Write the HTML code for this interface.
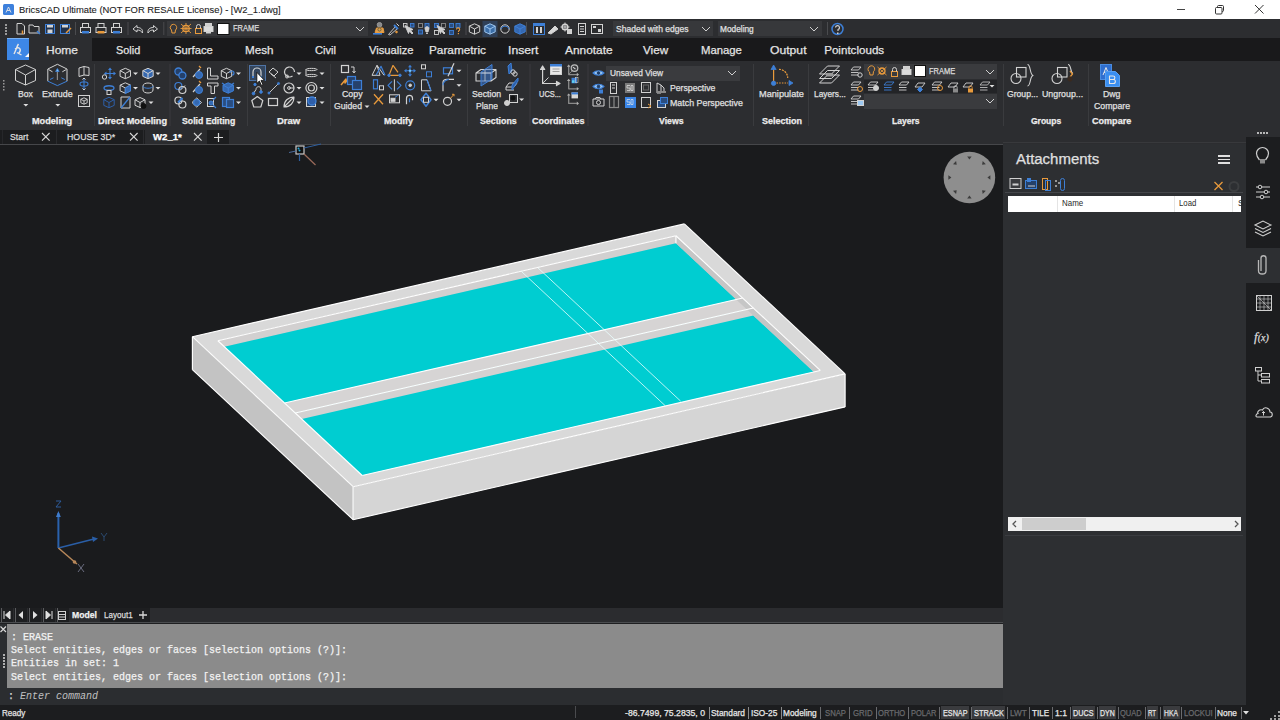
<!DOCTYPE html>
<html><head><meta charset="utf-8">
<style>
*{margin:0;padding:0;box-sizing:border-box}
html,body{width:1280px;height:720px;overflow:hidden;background:#1b1c1e;font-family:"Liberation Sans",sans-serif;position:relative}
.a{position:absolute}
.t{position:absolute;white-space:nowrap;color:#e6e6e6;-webkit-text-stroke:0.25px currentColor}
svg{overflow:visible}
</style></head><body>
<div class="a" style="left:0px;top:0px;width:1280px;height:19px;background:#ffffff;"></div>
<div class="a" style="left:0px;top:19px;width:1280px;height:19px;background:#2c2d30;"></div>
<div class="a" style="left:0px;top:38px;width:1280px;height:23px;background:#19191b;"></div>
<div class="a" style="left:0px;top:61px;width:1280px;height:83px;background:#2c2d30;"></div>
<div class="a" style="left:0px;top:130px;width:229px;height:14px;background:#1c1d1f;"></div>
<div class="a" style="left:0px;top:144px;width:1003px;height:464px;background:#1a1b1d;"></div>
<div class="a" style="left:1003px;top:144px;width:243px;height:561px;background:#2d2f32;"></div>
<div class="a" style="left:1002px;top:144px;width:1px;height:561px;background:#1a1b1d;"></div>
<div class="a" style="left:1003px;top:142px;width:243px;height:1px;background:#38393c;"></div>
<div class="a" style="left:1246px;top:137px;width:34px;height:568px;background:#1c1d1f;"></div>
<div class="a" style="left:1246px;top:248px;width:34px;height:35px;background:#2d2f32;"></div>
<div class="a" style="left:0px;top:608px;width:1003px;height:15px;background:#252629;"></div>
<div class="a" style="left:0px;top:623px;width:1003px;height:82px;background:#2b2d30;"></div>
<div class="a" style="left:7px;top:624px;width:996px;height:64px;background:#8b8b8b;"></div>
<div class="a" style="left:0px;top:705px;width:1280px;height:15px;background:#1c1d1f;"></div>
<div class="a" style="left:167px;top:21px;width:201px;height:15px;background:#37383b;"></div>
<div class="a" style="left:613px;top:21px;width:100px;height:15px;background:#37383b;"></div>
<div class="a" style="left:718px;top:21px;width:104px;height:15px;background:#37383b;"></div>
<div class="a" style="left:606px;top:66px;width:134px;height:15px;background:#3a3b3e;"></div>
<div class="a" style="left:864px;top:63.5px;width:133px;height:15.5px;background:#3a3b3e;"></div>
<div class="a" style="left:864px;top:79.5px;width:133px;height:13px;background:#232427;"></div>
<div class="a" style="left:864px;top:93.5px;width:133px;height:15.5px;background:#3a3b3e;"></div>
<div class="a" style="left:3px;top:4px;width:11px;height:11px;background:#3d80dc;border-radius:1.5px"></div>
<div class="t" style="left:18.50px;top:4.86px;font-size:9.5px;color:#222222;font-weight:normal;line-height:1;transform:scaleX(0.9894);transform-origin:0 0;-webkit-text-stroke:0.1px #222">BricsCAD Ultimate (NOT FOR RESALE License) - [W2_1.dwg]</div>
<div class="a" style="left:1176.5px;top:8.5px;width:8.5px;height:1px;background:#444;"></div>
<svg class="a" style="left:1214px;top:4px;" width="11" height="11" viewBox="0 0 11 11"><rect x="1.5" y="3.5" width="6.5" height="6.5" rx="1" stroke="#333" fill="none"/><path d="M3.5 3V2.5C3.5 1.8 4 1.5 4.5 1.5H8.5C9.2 1.5 9.5 2 9.5 2.5V6.5C9.5 7.2 9 7.5 8.5 7.5H8" stroke="#333" fill="none"/></svg>
<svg class="a" style="left:1254.5px;top:5px;" width="8.5" height="8.5" viewBox="0 0 8.5 8.5"><path d="M0 0L8.5 8.5M8.5 0L0 8.5" stroke="#333" stroke-width="1"/></svg>
<div class="a" style="left:0px;top:38px;width:92px;height:23px;background:#2c2d30;"></div>
<div class="a" style="left:7px;top:38px;width:22px;height:22px;background:#3d87e6;"></div>
<div class="a" style="left:7px;top:38px;width:22px;height:1px;background:#7ab0f0;"></div>
<div class="t" style="left:45.60px;top:44.28px;font-size:11.6px;color:#e4e4e4;font-weight:normal;line-height:1;transform:scaleX(1.0364);transform-origin:0 0;">Home</div>
<div class="t" style="left:115.60px;top:44.28px;font-size:11.6px;color:#e4e4e4;font-weight:normal;line-height:1;transform:scaleX(0.9376);transform-origin:0 0;">Solid</div>
<div class="t" style="left:174.00px;top:44.28px;font-size:11.6px;color:#e4e4e4;font-weight:normal;line-height:1;transform:scaleX(0.9709);transform-origin:0 0;">Surface</div>
<div class="t" style="left:245.30px;top:44.28px;font-size:11.6px;color:#e4e4e4;font-weight:normal;line-height:1;transform:scaleX(1.0049);transform-origin:0 0;">Mesh</div>
<div class="t" style="left:314.80px;top:44.28px;font-size:11.6px;color:#e4e4e4;font-weight:normal;line-height:1;transform:scaleX(0.9624);transform-origin:0 0;">Civil</div>
<div class="t" style="left:369.00px;top:44.28px;font-size:11.6px;color:#e4e4e4;font-weight:normal;line-height:1;transform:scaleX(0.9648);transform-origin:0 0;">Visualize</div>
<div class="t" style="left:429.00px;top:44.28px;font-size:11.6px;color:#e4e4e4;font-weight:normal;line-height:1;transform:scaleX(1.0163);transform-origin:0 0;">Parametric</div>
<div class="t" style="left:508.30px;top:44.28px;font-size:11.6px;color:#e4e4e4;font-weight:normal;line-height:1;transform:scaleX(1.0517);transform-origin:0 0;">Insert</div>
<div class="t" style="left:565.30px;top:44.28px;font-size:11.6px;color:#e4e4e4;font-weight:normal;line-height:1;transform:scaleX(1.0267);transform-origin:0 0;">Annotate</div>
<div class="t" style="left:643.00px;top:44.28px;font-size:11.6px;color:#e4e4e4;font-weight:normal;line-height:1;transform:scaleX(1.0064);transform-origin:0 0;">View</div>
<div class="t" style="left:701.00px;top:44.28px;font-size:11.6px;color:#e4e4e4;font-weight:normal;line-height:1;transform:scaleX(0.9753);transform-origin:0 0;">Manage</div>
<div class="t" style="left:769.50px;top:44.28px;font-size:11.6px;color:#e4e4e4;font-weight:normal;line-height:1;transform:scaleX(1.0489);transform-origin:0 0;">Output</div>
<div class="t" style="left:824.20px;top:44.28px;font-size:11.6px;color:#e4e4e4;font-weight:normal;line-height:1;">Pointclouds</div>
<div class="t" style="left:17.70px;top:88.74px;font-size:9.4px;color:#e0e0e0;font-weight:normal;line-height:1;transform:scaleX(0.9127);transform-origin:0 0;">Box</div>
<div class="t" style="left:42.20px;top:88.74px;font-size:9.4px;color:#e0e0e0;font-weight:normal;line-height:1;transform:scaleX(0.9511);transform-origin:0 0;">Extrude</div>
<div class="t" style="left:341.60px;top:89.04px;font-size:9.4px;color:#e0e0e0;font-weight:normal;line-height:1;transform:scaleX(0.9385);transform-origin:0 0;">Copy</div>
<div class="t" style="left:334.10px;top:101.04px;font-size:9.4px;color:#e0e0e0;font-weight:normal;line-height:1;transform:scaleX(0.9269);transform-origin:0 0;">Guided</div>
<div class="t" style="left:472.00px;top:89.24px;font-size:9.4px;color:#e0e0e0;font-weight:normal;line-height:1;transform:scaleX(0.9330);transform-origin:0 0;">Section</div>
<div class="t" style="left:475.50px;top:101.04px;font-size:9.4px;color:#e0e0e0;font-weight:normal;line-height:1;transform:scaleX(0.9142);transform-origin:0 0;">Plane</div>
<div class="t" style="left:538.75px;top:89.24px;font-size:9.4px;color:#e0e0e0;font-weight:normal;line-height:1;transform:scaleX(0.7947);transform-origin:0 0;">UCS...</div>
<div class="t" style="left:758.75px;top:89.24px;font-size:9.4px;color:#e0e0e0;font-weight:normal;line-height:1;transform:scaleX(0.9790);transform-origin:0 0;">Manipulate</div>
<div class="t" style="left:814.25px;top:89.24px;font-size:9.4px;color:#e0e0e0;font-weight:normal;line-height:1;transform:scaleX(0.8877);transform-origin:0 0;">Layers...</div>
<div class="t" style="left:1006.75px;top:89.24px;font-size:9.4px;color:#e0e0e0;font-weight:normal;line-height:1;transform:scaleX(0.9196);transform-origin:0 0;">Group...</div>
<div class="t" style="left:1042.00px;top:89.24px;font-size:9.4px;color:#e0e0e0;font-weight:normal;line-height:1;transform:scaleX(0.9397);transform-origin:0 0;">Ungroup...</div>
<div class="t" style="left:1102.50px;top:89.24px;font-size:9.4px;color:#e0e0e0;font-weight:normal;line-height:1;transform:scaleX(0.9309);transform-origin:0 0;">Dwg</div>
<div class="t" style="left:1093.75px;top:101.04px;font-size:9.4px;color:#e0e0e0;font-weight:normal;line-height:1;transform:scaleX(0.9372);transform-origin:0 0;">Compare</div>
<div class="t" style="left:669.50px;top:83.29px;font-size:9.4px;color:#e0e0e0;font-weight:normal;line-height:1;transform:scaleX(0.9264);transform-origin:0 0;">Perspective</div>
<div class="t" style="left:669.50px;top:98.29px;font-size:9.4px;color:#e0e0e0;font-weight:normal;line-height:1;transform:scaleX(0.9442);transform-origin:0 0;">Match Perspective</div>
<div class="t" style="left:610.00px;top:68.04px;font-size:9.4px;color:#e0e0e0;font-weight:normal;line-height:1;transform:scaleX(0.8886);transform-origin:0 0;">Unsaved View</div>
<div class="t" style="left:31.60px;top:116.75px;font-size:8.8px;color:#ececec;font-weight:bold;line-height:1;transform:scaleX(1.0380);transform-origin:0 0;">Modeling</div>
<div class="t" style="left:97.60px;top:116.75px;font-size:8.8px;color:#ececec;font-weight:bold;line-height:1;transform:scaleX(1.0470);transform-origin:0 0;">Direct Modeling</div>
<div class="t" style="left:181.75px;top:116.75px;font-size:8.8px;color:#ececec;font-weight:bold;line-height:1;transform:scaleX(0.9904);transform-origin:0 0;">Solid Editing</div>
<div class="t" style="left:276.75px;top:116.75px;font-size:8.8px;color:#ececec;font-weight:bold;line-height:1;transform:scaleX(1.0784);transform-origin:0 0;">Draw</div>
<div class="t" style="left:384.25px;top:116.75px;font-size:8.8px;color:#ececec;font-weight:bold;line-height:1;transform:scaleX(1.0234);transform-origin:0 0;">Modify</div>
<div class="t" style="left:480.00px;top:116.75px;font-size:8.8px;color:#ececec;font-weight:bold;line-height:1;">Sections</div>
<div class="t" style="left:532.00px;top:116.75px;font-size:8.8px;color:#ececec;font-weight:bold;line-height:1;transform:scaleX(1.0224);transform-origin:0 0;">Coordinates</div>
<div class="t" style="left:658.75px;top:116.75px;font-size:8.8px;color:#ececec;font-weight:bold;line-height:1;transform:scaleX(0.9890);transform-origin:0 0;">Views</div>
<div class="t" style="left:761.75px;top:116.75px;font-size:8.8px;color:#ececec;font-weight:bold;line-height:1;transform:scaleX(1.0226);transform-origin:0 0;">Selection</div>
<div class="t" style="left:891.75px;top:116.75px;font-size:8.8px;color:#ececec;font-weight:bold;line-height:1;transform:scaleX(0.9690);transform-origin:0 0;">Layers</div>
<div class="t" style="left:1030.50px;top:116.75px;font-size:8.8px;color:#ececec;font-weight:bold;line-height:1;transform:scaleX(0.9669);transform-origin:0 0;">Groups</div>
<div class="t" style="left:1092.00px;top:116.75px;font-size:8.8px;color:#ececec;font-weight:bold;line-height:1;transform:scaleX(1.0289);transform-origin:0 0;">Compare</div>
<div class="t" style="left:232.50px;top:24.35px;font-size:8.8px;color:#dcdcdc;font-weight:normal;line-height:1;transform:scaleX(0.8539);transform-origin:0 0;">FRAME</div>
<div class="t" style="left:928.75px;top:66.85px;font-size:8.8px;color:#dcdcdc;font-weight:normal;line-height:1;transform:scaleX(0.8523);transform-origin:0 0;">FRAME</div>
<div class="t" style="left:615.60px;top:24.55px;font-size:8.8px;color:#e0e0e0;font-weight:normal;line-height:1;transform:scaleX(0.9687);transform-origin:0 0;">Shaded with edges</div>
<div class="t" style="left:720.00px;top:24.55px;font-size:8.8px;color:#e0e0e0;font-weight:normal;line-height:1;transform:scaleX(0.9446);transform-origin:0 0;">Modeling</div>
<svg class="a" style="left:0px;top:0px;" width="1280" height="720" viewBox="0 0 1280 720"><rect x="5" y="24" width="2" height="2" fill="#9a9a9a"/><rect x="5" y="27" width="2" height="2" fill="#9a9a9a"/><rect x="5" y="30" width="2" height="2" fill="#9a9a9a"/><rect x="5" y="33" width="2" height="2" fill="#9a9a9a"/><path d="M17 23.5H22L24.5 26V34H17Z" stroke="#d2d2d2" stroke-width="1.0" fill="none" stroke-linejoin="round" /><path d="M22.5 30.5V34" stroke="#e89a3c" stroke-width="1.5" fill="none" stroke-linejoin="round" /><path d="M29 25H33L34 26.5H39V33H29Z" stroke="#d2d2d2" stroke-width="1.0" fill="none" stroke-linejoin="round" /><path d="M37 31L40 34" stroke="#3d7fd6" stroke-width="1.5" fill="none" stroke-linejoin="round" /><rect x="45.5" y="24.5" width="9" height="9" stroke="#3d7fd6" stroke-width="1.0" fill="#20324e"/><rect x="47" y="25" width="6" height="2.5" fill="#d2d2d2"/><rect x="47.5" y="29.5" width="5" height="3.5" fill="#d2d2d2"/><rect x="60.5" y="24.5" width="9" height="9" stroke="#3d7fd6" stroke-width="1.0" fill="#20324e"/><rect x="62" y="25" width="6" height="2.5" fill="#d2d2d2"/><path d="M66 33L71 28" stroke="#e89a3c" stroke-width="1.5" fill="none" stroke-linejoin="round" /><rect x="75" y="22" width="1" height="13" fill="#4a4b4e"/><rect x="82.5" y="23.5" width="6" height="4" stroke="#d2d2d2" stroke-width="1.0" fill="none"/><rect x="80.5" y="27.5" width="10" height="5" stroke="#d2d2d2" stroke-width="1.0" fill="none"/><rect x="82" y="31" width="7" height="2.5" fill="#3d7fd6"/><rect x="98.0" y="23.5" width="6" height="4" stroke="#d2d2d2" stroke-width="1.0" fill="none"/><rect x="96.0" y="27.5" width="10" height="5" stroke="#d2d2d2" stroke-width="1.0" fill="none"/><rect x="97.5" y="31" width="7" height="2.5" fill="#e89a3c"/><rect x="113.5" y="23.5" width="6" height="4" stroke="#d2d2d2" stroke-width="1.0" fill="none"/><rect x="111.5" y="27.5" width="10" height="5" stroke="#d2d2d2" stroke-width="1.0" fill="none"/><rect x="113" y="31" width="7" height="2.5" fill="#3d7fd6"/><rect x="127.5" y="22" width="1" height="13" fill="#4a4b4e"/><path d="M133 29L137 25.5V27.5C141 27.5 143 29.5 142.5 33C141 30.5 139.5 30 137 30V32Z" stroke="#d2d2d2" stroke-width="1.0" fill="none" stroke-linejoin="round" /><path d="M157.5 29L153.5 25.5V27.5C149.5 27.5 147.5 29.5 148 33C149.5 30.5 151 30 153.5 30V32Z" stroke="#d2d2d2" stroke-width="1.0" fill="none" stroke-linejoin="round" /><rect x="163.3" y="22" width="1" height="13" fill="#4a4b4e"/><path d="M171 25.5a3.2 3.2 0 1 1 4.5 4.5L175 33H172L171.5 30A3.2 3.2 0 0 1 171 25.5Z" stroke="#e89a3c" stroke-width="1.0" fill="none" stroke-linejoin="round" /><circle cx="186" cy="28.5" r="3.2" stroke="#e89a3c" stroke-width="1.3" fill="none"/><path d="M181 24L191 33M191 24L181 33M186 23V34M180.5 28.5H191.5" stroke="#e89a3c" stroke-width="0.9" fill="none" stroke-linejoin="round" /><rect x="195.5" y="28.5" width="6" height="5" stroke="#e89a3c" stroke-width="1.0" fill="none"/><path d="M196.5 28.5V26.5a2 2 0 0 1 4 0V28.5" stroke="#d2d2d2" stroke-width="1.0" fill="none" stroke-linejoin="round" /><rect x="205.5" y="23.5" width="6" height="3" stroke="#d2d2d2" stroke-width="1" fill="#cfcfcf"/><rect x="204" y="26.5" width="9" height="5" stroke="#d2d2d2" stroke-width="1" fill="#dcdcdc"/><rect x="206" y="31.5" width="5" height="2" fill="#d2d2d2"/><rect x="217.5" y="23.5" width="11.5" height="11" stroke="#111" stroke-width="1" fill="#ffffff"/><path d="M356 27.0L360 31.0L364 27.0" stroke="#d0d0d0" stroke-width="1.0" fill="none" stroke-linejoin="round" /><circle cx="379.5" cy="24.8" r="2.3" stroke="#9a9a9a" stroke-width="1.0" fill="#8a8a8a"/><path d="M375 32.5L376.5 28H383L384 32.5Z" stroke="#e89a3c" stroke-width="1.0" fill="#e0a050" stroke-linejoin="round" /><circle cx="379.5" cy="29.5" r="1.6" stroke="#553" stroke-width="0.8" fill="none"/><path d="M373 33.8H382" stroke="#3d7fd6" stroke-width="1.6" fill="none" stroke-linejoin="round" /><path d="M388.5 34.5L395.5 26.5L397.5 28.5L390 35Z" stroke="#d2d2d2" stroke-width="0.9" fill="none" stroke-linejoin="round" /><path d="M394 25L398 29" stroke="#3d7fd6" stroke-width="2.0" fill="none" stroke-linejoin="round" /><path d="M396.5 23.5L399 26" stroke="#d2d2d2" stroke-width="1.0" fill="none" stroke-linejoin="round" /><circle cx="396.5" cy="32" r="0.9" stroke="#e89a3c" stroke-width="0.8" fill="#e89a3c"/><rect x="403.5" y="23.5" width="3.5" height="3.5" stroke="#d2d2d2" stroke-width="0.9" fill="none"/><rect x="410.5" y="23.5" width="3.5" height="3.5" stroke="#3d7fd6" stroke-width="0.9" fill="#2a4d80"/><path d="M405 25.5L408.5 33.5L409.5 31L412 34L413 33L410.5 30.5L413 29.5Z" stroke="#d2d2d2" stroke-width="0.9" fill="#d0d0d0" stroke-linejoin="round" /><rect x="418.5" y="23.5" width="4" height="4" stroke="#8a8a8a" stroke-width="0.9" fill="none"/><rect x="425" y="23.5" width="4" height="4" stroke="#3d7fd6" stroke-width="0.9" fill="#2a4d80"/><rect x="418.5" y="30" width="4" height="4" stroke="#3d7fd6" stroke-width="0.9" fill="#2a4d80"/><path d="M425 28.5C425 26 429 26 429 28.5C429 30 428 31 428 32H426C426 31 425 30 425 28.5ZM426 33.5H428" stroke="#d2d2d2" stroke-width="0.9" fill="#cfcfcf" stroke-linejoin="round" /><rect x="434.5" y="23.5" width="4" height="4" stroke="#3d7fd6" stroke-width="0.9" fill="#2a4d80"/><rect x="441.5" y="23.5" width="4" height="4" stroke="#8a8a8a" stroke-width="0.9" fill="none"/><rect x="434.5" y="30.5" width="4" height="4" stroke="#d2d2d2" stroke-width="0.9" fill="none"/><path d="M437 25.5L440.5 33.5L441.5 31L444 34L445 33L442.5 30.5L445 29.5Z" stroke="#d2d2d2" stroke-width="0.9" fill="#d0d0d0" stroke-linejoin="round" /><rect x="449.5" y="23.5" width="4" height="4" stroke="#3d7fd6" stroke-width="0.9" fill="#2a4d80"/><rect x="456" y="23.5" width="4" height="4" stroke="#3d7fd6" stroke-width="0.9" fill="#2a4d80"/><rect x="449.5" y="30.5" width="4" height="4" stroke="#3d7fd6" stroke-width="0.9" fill="#2a4d80"/><path d="M456.5 29.5a1.6 1.6 0 1 1 2 1.5V32" stroke="#e89a3c" stroke-width="1.1" fill="none" stroke-linejoin="round" /><rect x="457.8" y="33" width="1.2" height="1.2" fill="#e89a3c"/><rect x="465.5" y="22" width="1" height="13" fill="#4a4b4e"/><path d="M474.5 23.8L479.7 26.14V31.86L474.5 34.2L469.3 31.86V26.14Z" stroke="#d2d2d2" stroke-width="1.0" fill="none" stroke-linejoin="round" /><path d="M469.3 26.14L474.5 29L479.7 26.14M474.5 29V34.2" stroke="#d2d2d2" stroke-width="1.0" fill="none" stroke-linejoin="round" /><rect x="482.5" y="21" width="15" height="16" fill="#2f4058"/><path d="M490 23.8L495.2 26.14V31.86L490 34.2L484.8 31.86V26.14Z" stroke="#9cc4ee" stroke-width="1.0" fill="#3b6ea8" stroke-linejoin="round" /><path d="M484.8 26.14L490 29L495.2 26.14M490 29V34.2" stroke="#9cc4ee" stroke-width="1.0" fill="none" stroke-linejoin="round" /><circle cx="505" cy="29" r="4.2" stroke="#d2d2d2" stroke-width="1.0" fill="none"/><path d="M501 29a4.2 4.2 0 0 1 8 0" stroke="#3d7fd6" stroke-width="1.0" fill="none" stroke-linejoin="round" /><path d="M520 23.8L525.2 26.14V31.86L520 34.2L514.8 31.86V26.14Z" stroke="#3d7fd6" stroke-width="1.0" fill="#3568b0" stroke-linejoin="round" /><path d="M514.8 26.14L520 29L525.2 26.14M520 29V34.2" stroke="#3d7fd6" stroke-width="1.0" fill="none" stroke-linejoin="round" /><rect x="526" y="22" width="1" height="13" fill="#4a4b4e"/><rect x="533.5" y="23.5" width="11" height="11" stroke="#3d7fd6" stroke-width="1" fill="none"/><rect x="534" y="24" width="10" height="2" fill="#3d7fd6"/><rect x="536" y="27" width="2" height="6" fill="#d2d2d2"/><rect x="540" y="27" width="2" height="6" fill="#d2d2d2"/><path d="M548 33L555 26L558 29L551 34Z" stroke="#d2d2d2" stroke-width="1.0" fill="#d8d8d8" stroke-linejoin="round" /><circle cx="565" cy="27" r="2.8" stroke="#d2d2d2" stroke-width="1.5" fill="none"/><path d="M565 22.5V31.5M560.5 27H569.5" stroke="#d2d2d2" stroke-width="1.0" fill="none" stroke-linejoin="round" /><rect x="567.5" y="29.5" width="4" height="4" stroke="#d2d2d2" stroke-width="1" fill="#cfcfcf"/><rect x="578.5" y="23.5" width="7" height="11" stroke="#d2d2d2" stroke-width="1.0" fill="none"/><path d="M580 26.5H584M580 29H584M580 31.5H584" stroke="#d2d2d2" stroke-width="1.0" fill="none" stroke-linejoin="round" /><rect x="591.5" y="24.5" width="11" height="9" stroke="#d2d2d2" stroke-width="1.0" fill="none"/><rect x="593" y="26" width="3" height="2" fill="#d2d2d2"/><rect x="598" y="29" width="3" height="3" fill="#d2d2d2"/><path d="M702 27.0L706 31.0L710 27.0" stroke="#d0d0d0" stroke-width="1.0" fill="none" stroke-linejoin="round" /><path d="M810 27.0L814 31.0L818 27.0" stroke="#d0d0d0" stroke-width="1.0" fill="none" stroke-linejoin="round" /><rect x="827" y="22" width="1" height="13" fill="#4a4b4e"/><circle cx="837.5" cy="29" r="5.5" stroke="#3d7fd6" stroke-width="1.5" fill="none"/><path d="M835.5 27.5a2 2 0 1 1 2.5 2V31" stroke="#d2d2d2" stroke-width="1.2" fill="none" stroke-linejoin="round" /><rect x="837" y="32.5" width="1.5" height="1.5" fill="#d2d2d2"/><rect x="3" y="80" width="1.5" height="1.5" fill="#9a9a9a"/><rect x="3" y="83" width="1.5" height="1.5" fill="#9a9a9a"/><rect x="3" y="86" width="1.5" height="1.5" fill="#9a9a9a"/><rect x="3" y="89" width="1.5" height="1.5" fill="#9a9a9a"/><path d="M14 54C16 50 17 46 18.5 44M15 49C19 46 22 49 19 53M17 52.5L21.5 55" stroke="#e6e6e6" stroke-width="1.4" fill="none" stroke-linejoin="round" /><path d="M25 57H29V53Z" stroke="none" stroke-width="0" fill="#ffffff" stroke-linejoin="round" /><path d="M6 12.5L8.5 7L11 12.5M7 10.5H10" stroke="#e6e6e6" stroke-width="0.9" fill="none" stroke-linejoin="round" /><path d="M25.5 65L35.5 69.5V80.5L25.5 85L15.5 80.5V69.5Z" stroke="#d2d2d2" stroke-width="1.0" fill="none" stroke-linejoin="round" /><path d="M15.5 69.5L25.5 75L35.5 69.5M25.5 75V85" stroke="#d2d2d2" stroke-width="1.0" fill="none" stroke-linejoin="round" /><path d="M23.3 104H28.3L25.8 106.5Z" fill="#e0e0e0"/><path d="M47.8 81.2V69L57.4 64.3L67 69V81.2" stroke="#d2d2d2" stroke-width="1.0" fill="none" stroke-linejoin="round" /><path d="M47.8 81.2L57.4 85.6L67 81.2" stroke="#3d7fd6" stroke-width="1.0" fill="none" stroke-linejoin="round" /><path d="M48.5 69.5L52.5 71.8M66.3 69.5L62.3 71.8" stroke="#d2d2d2" stroke-width="1.0" fill="none" stroke-linejoin="round" /><path d="M50 79.5L53.5 77.8M64.8 79.5L61.3 77.8" stroke="#3d7fd6" stroke-width="1.0" fill="none" stroke-linejoin="round" /><path d="M57.4 80V70.5" stroke="#8a8a8a" stroke-width="1.2" fill="none" stroke-linejoin="round" /><path d="M55.6 71.5L57.4 68.5L59.2 71.5Z" stroke="#3d7fd6" stroke-width="0.8" fill="#7cc8ff" stroke-linejoin="round" /><path d="M55.3 104H60.3L57.8 106.5Z" fill="#e0e0e0"/><path d="M79 68L84 66.5V75L79 76.5ZM84 66.5L89 67.5V75.5L84 75" stroke="#d2d2d2" stroke-width="1.0" fill="none" stroke-linejoin="round" /><path d="M80 84C80 81 88 81 88 84C88 87 80 87 80 84ZM84 78V90" stroke="#3d7fd6" stroke-width="1.1" fill="none" stroke-linejoin="round" /><path d="M82.5 79.5L84 78L85.5 79.5M82.5 88.5L84 90L85.5 88.5" stroke="#d2d2d2" stroke-width="1.0" fill="none" stroke-linejoin="round" /><rect x="78.5" y="95.5" width="11" height="11" stroke="#d2d2d2" stroke-width="1.0" fill="none"/><path d="M84 97.8L87.2 99.24V102.76L84 104.2L80.8 102.76V99.24Z" stroke="#d2d2d2" stroke-width="0.9" fill="none" stroke-linejoin="round" /><path d="M80.8 99.24L84 101L87.2 99.24M84 101V104.2" stroke="#d2d2d2" stroke-width="0.9" fill="none" stroke-linejoin="round" /><rect x="94" y="64" width="1" height="62" fill="#3a3b3e"/><path d="M105.5 73.5H114.5M110 69V78" stroke="#3d7fd6" stroke-width="1.1" fill="none" stroke-linejoin="round" /><path d="M110 67.5L108 70H112ZM110 79.5L108 77H112ZM104 73.5L106.5 71.5V75.5ZM116 73.5L113.5 71.5V75.5Z" fill="#3d7fd6"/><circle cx="104.5" cy="77" r="2.2" stroke="#d2d2d2" stroke-width="1.0" fill="#2c2d30"/><path d="M125.3 68.3L130.5 70.64V76.36L125.3 78.7L120.1 76.36V70.64Z" stroke="#d2d2d2" stroke-width="1.0" fill="none" stroke-linejoin="round" /><path d="M120.1 70.64L125.3 73.5L130.5 70.64M125.3 73.5V78.7" stroke="#d2d2d2" stroke-width="1.0" fill="none" stroke-linejoin="round" /><path d="M133.0 72.5H138.0L135.5 75.0Z" fill="#e0e0e0"/><path d="M148 68.3L153.2 70.64V76.36L148 78.7L142.8 76.36V70.64Z" stroke="#d2d2d2" stroke-width="1.0" fill="#3568b0" stroke-linejoin="round" /><path d="M142.8 70.64L148 73.5L153.2 70.64M148 73.5V78.7" stroke="#d2d2d2" stroke-width="1.0" fill="none" stroke-linejoin="round" /><path d="M155.5 72.5H160.5L158 75.0Z" fill="#e0e0e0"/><path d="M104 88C104 85 114 85 114 88C114 91 104 91 104 88Z" stroke="#3d7fd6" stroke-width="1.3" fill="none" stroke-linejoin="round" /><rect x="107" y="90.5" width="4" height="4" stroke="#d2d2d2" stroke-width="1" fill="#2c2d30"/><path d="M125.3 82.8L130.5 85.14V90.86L125.3 93.2L120.1 90.86V85.14Z" stroke="#d2d2d2" stroke-width="1.0" fill="none" stroke-linejoin="round" /><path d="M120.1 85.14L125.3 88L130.5 85.14M125.3 88V93.2" stroke="#d2d2d2" stroke-width="1.0" fill="none" stroke-linejoin="round" /><path d="M125.3 88L130.5 85.1V90.9L125.3 93.5Z" stroke="#3d7fd6" stroke-width="1" fill="#3568b0" stroke-linejoin="round" /><path d="M133.0 87H138.0L135.5 89.5Z" fill="#e0e0e0"/><path d="M143 86C143 82 153 82 153 86V90C153 94 143 94 143 90Z" stroke="#d2d2d2" stroke-width="1.0" fill="none" stroke-linejoin="round" /><path d="M143 86C143 89 153 89 153 86" stroke="#3d7fd6" stroke-width="1.0" fill="none" stroke-linejoin="round" /><path d="M155.5 87H160.5L158 89.5Z" fill="#e0e0e0"/><path d="M109 97.3L114.2 99.64V105.36L109 107.7L103.8 105.36V99.64Z" stroke="#2d5fa8" stroke-width="1.0" fill="none" stroke-linejoin="round" /><path d="M103.8 99.64L109 102.5L114.2 99.64M109 102.5V107.7" stroke="#2d5fa8" stroke-width="1.0" fill="none" stroke-linejoin="round" /><path d="M121 97L130 97L130 108L121 108Z" stroke="#d2d2d2" stroke-width="1.0" fill="none" stroke-linejoin="round" /><path d="M121 108L130 97" stroke="#3d7fd6" stroke-width="1.3" fill="none" stroke-linejoin="round" /><path d="M140 97.5L145.0 99.75V105.25L140 107.5L135.0 105.25V99.75Z" stroke="#d2d2d2" stroke-width="1.0" fill="none" stroke-linejoin="round" /><path d="M135.0 99.75L140 102.5L145.0 99.75M140 102.5V107.5" stroke="#d2d2d2" stroke-width="1.0" fill="none" stroke-linejoin="round" /><circle cx="143.5" cy="106" r="2.5" stroke="#111" stroke-width="1" fill="#111"/><path d="M148.5 101.5H153.5L151 104.0Z" fill="#e0e0e0"/><rect x="169.5" y="64" width="1" height="62" fill="#3a3b3e"/><circle cx="178.4" cy="71.5" r="3.5" stroke="#3d7fd6" stroke-width="1.3" fill="#24406a"/><circle cx="182.4" cy="75.5" r="3.5" stroke="#3d7fd6" stroke-width="1.3" fill="#24406a"/><path d="M193 77L200 69" stroke="#d2d2d2" stroke-width="1.2" fill="none" stroke-linejoin="round" /><circle cx="199" cy="75" r="3.5" stroke="#3d7fd6" stroke-width="1" fill="#3568b0"/><path d="M199 66L201 68" stroke="#e89a3c" stroke-width="1.2" fill="none" stroke-linejoin="round" /><path d="M207.5 68H210.5V76H218V79H207.5Z" stroke="#d2d2d2" stroke-width="1.0" fill="none" stroke-linejoin="round" /><path d="M226.5 68.3L231.7 70.64V76.36L226.5 78.7L221.3 76.36V70.64Z" stroke="#d2d2d2" stroke-width="1.0" fill="none" stroke-linejoin="round" /><path d="M221.3 70.64L226.5 73.5L231.7 70.64M226.5 73.5V78.7" stroke="#d2d2d2" stroke-width="1.0" fill="none" stroke-linejoin="round" /><path d="M230 73a2 2 0 1 1 2 2" stroke="#3d7fd6" stroke-width="1.2" fill="none" stroke-linejoin="round" /><path d="M236.0 72.5H241.0L238.5 75.0Z" fill="#e0e0e0"/><circle cx="178.4" cy="86" r="3.5" stroke="#3d7fd6" stroke-width="1.2" fill="none"/><circle cx="182.4" cy="90" r="3.5" stroke="#d2d2d2" stroke-width="1.2" fill="none"/><path d="M180 90.5L185 85.5" stroke="#d2d2d2" stroke-width="1" fill="none" stroke-linejoin="round" /><path d="M193 92L200 84" stroke="#d2d2d2" stroke-width="1.2" fill="none" stroke-linejoin="round" /><circle cx="199" cy="90" r="3.5" stroke="#3d7fd6" stroke-width="1" fill="#3568b0"/><path d="M199 81L201 83" stroke="#e89a3c" stroke-width="1.2" fill="none" stroke-linejoin="round" /><path d="M207.5 83H218V86H214.5V93.5H211V86H207.5Z" stroke="#d2d2d2" stroke-width="1.0" fill="none" stroke-linejoin="round" /><path d="M228.2 82.8L233.39999999999998 85.14V90.86L228.2 93.2L223.0 90.86V85.14Z" stroke="#3d7fd6" stroke-width="1.0" fill="#3568b0" stroke-linejoin="round" /><path d="M223.0 85.14L228.2 88L233.39999999999998 85.14M228.2 88V93.2" stroke="#3d7fd6" stroke-width="1.0" fill="none" stroke-linejoin="round" /><path d="M222 83L225 85M234 83L231 85" stroke="#3d7fd6" stroke-width="1.2" fill="none" stroke-linejoin="round" /><path d="M236.0 87H241.0L238.5 89.5Z" fill="#e0e0e0"/><circle cx="178.4" cy="100.5" r="3.5" stroke="#d2d2d2" stroke-width="1.2" fill="none"/><circle cx="182.4" cy="104.5" r="3.5" stroke="#d2d2d2" stroke-width="1.2" fill="none"/><path d="M178 102.5L182.5 98" stroke="#3d7fd6" stroke-width="2" fill="none" stroke-linejoin="round" /><path d="M192 102.5L196.7 98L201.5 102.5L196.7 107Z" stroke="#d2d2d2" stroke-width="1.0" fill="none" stroke-linejoin="round" /><circle cx="196.7" cy="102.5" r="3" stroke="#3d7fd6" stroke-width="1.2" fill="#3568b0"/><rect x="207.5" y="98.5" width="6" height="8" stroke="#d2d2d2" stroke-width="1.0" fill="none"/><path d="M213 100L216 97M213 105L216 108" stroke="#3d7fd6" stroke-width="1.2" fill="none" stroke-linejoin="round" /><circle cx="211" cy="103" r="2" stroke="#3d7fd6" stroke-width="1" fill="#3568b0"/><rect x="222.5" y="97.5" width="7" height="9" stroke="#3d7fd6" stroke-width="1.2" fill="#2a4d80"/><rect x="226.5" y="99.5" width="7" height="8" stroke="#3d7fd6" stroke-width="1.2" fill="#2a4d80"/><path d="M236.0 101.5H241.0L238.5 104.0Z" fill="#e0e0e0"/><rect x="247" y="64" width="1" height="62" fill="#3a3b3e"/><rect x="249" y="65.5" width="17" height="15" fill="#34465e"/><rect x="249.5" y="65.5" width="16" height="15" stroke="#4f74a6" stroke-width="1" fill="none"/><path d="M253 77V72a4 4 0 0 1 8 0V77" stroke="#d2d2d2" stroke-width="1.2" fill="none" stroke-linejoin="round" /><rect x="252" y="76" width="2" height="2" fill="#3d7fd6"/><rect x="260" y="76" width="2" height="2" fill="#3d7fd6"/><path d="M256.8 72.3V83.5L259.4 81L261.4 85.4L263 84.7L261 80.4H264.6Z" stroke="#111" stroke-width="0.9" fill="#ffffff" stroke-linejoin="round" /><path d="M269 72L273 68L278 72L274 76Z" stroke="#d2d2d2" stroke-width="1.0" fill="none" stroke-linejoin="round" /><path d="M271 74L276 78" stroke="#d2d2d2" stroke-width="1.0" fill="none" stroke-linejoin="round" /><path d="M294.5 72a5 5 0 1 0 -2 4" stroke="#d2d2d2" stroke-width="1.2" fill="none" stroke-linejoin="round" /><circle cx="287" cy="76.5" r="1.5" stroke="#d2d2d2" stroke-width="1" fill="none"/><path d="M296.5 72.5H301.5L299 75.0Z" fill="#e0e0e0"/><path d="M306 69.5C306 68 317 68 317 69.5C317 71 306 71 306 69.5ZM306 75.5C306 74 317 74 317 75.5C317 77 306 77 306 75.5ZM306 69.5V75.5" stroke="#d2d2d2" stroke-width="1.0" fill="none" stroke-linejoin="round" /><path d="M319.5 72.5H324.5L322 75.0Z" fill="#e0e0e0"/><path d="M253.5 93.5L256 89.5C256 86 261 85.5 261 89.5V91" stroke="#d2d2d2" stroke-width="1.0" fill="none" stroke-linejoin="round" /><circle cx="253.5" cy="93.5" r="1.3" stroke="#3d7fd6" stroke-width="1" fill="#3d7fd6"/><circle cx="261" cy="92" r="1.3" stroke="#3d7fd6" stroke-width="1" fill="#3d7fd6"/><circle cx="255" cy="84.5" r="1.2" stroke="#3d7fd6" stroke-width="1" fill="#3d7fd6"/><path d="M269 93L278.5 83.5" stroke="#d2d2d2" stroke-width="0.9" fill="none" stroke-linejoin="round" /><circle cx="269" cy="93" r="1.1" stroke="#3d7fd6" stroke-width="0.8" fill="#3d7fd6"/><circle cx="278.5" cy="83.5" r="1.1" stroke="#3d7fd6" stroke-width="0.8" fill="#3d7fd6"/><circle cx="289" cy="88" r="5" stroke="#d2d2d2" stroke-width="1.2" fill="none"/><circle cx="289" cy="88" r="1.4" stroke="#d2d2d2" stroke-width="1" fill="none"/><path d="M289 88H294" stroke="#d2d2d2" stroke-width="1" fill="none" stroke-linejoin="round" /><path d="M296.5 87H301.5L299 89.5Z" fill="#e0e0e0"/><circle cx="311.4" cy="88" r="5.5" stroke="#d2d2d2" stroke-width="1.2" fill="none"/><circle cx="311.4" cy="88" r="3" stroke="#d2d2d2" stroke-width="1.2" fill="none"/><path d="M319.5 87H324.5L322 89.5Z" fill="#e0e0e0"/><path d="M257.3 96.5L262.8 100.5L260.8 107H253.8L251.8 100.5Z" stroke="#d2d2d2" stroke-width="1.2" fill="none" stroke-linejoin="round" /><rect x="268.5" y="98.5" width="9" height="7" stroke="#d2d2d2" stroke-width="1.2" fill="none"/><path d="M284 107C290 107 294 103 294 97C288 97 284 101 284 107ZM284 107L294 97" stroke="#d2d2d2" stroke-width="1.1" fill="none" stroke-linejoin="round" /><path d="M296.5 101.5H301.5L299 104.0Z" fill="#e0e0e0"/><rect x="306.5" y="97.5" width="9" height="9" stroke="#d2d2d2" stroke-width="1.0" fill="#26416b"/><circle cx="312" cy="101" r="4" stroke="#3d7fd6" stroke-width="1.3" fill="#2f5ea8"/><path d="M319.5 101.5H324.5L322 104.0Z" fill="#e0e0e0"/><rect x="330" y="64" width="1" height="62" fill="#3a3b3e"/><rect x="341.5" y="65.5" width="7" height="7" stroke="#d2d2d2" stroke-width="1.2" fill="none"/><path d="M351 67H354V72M352.5 71L354 73L355.5 71" stroke="#d2d2d2" stroke-width="1.0" fill="none" stroke-linejoin="round" /><path d="M341 85L346 79L345 83L350 77" stroke="#e89a3c" stroke-width="1.5" fill="none" stroke-linejoin="round" /><rect x="347.5" y="76.5" width="8" height="8" stroke="#3d7fd6" stroke-width="1.2" fill="#26416b"/><rect x="352.5" y="80.5" width="9" height="9" stroke="#3d7fd6" stroke-width="1.2" fill="#26416b"/><path d="M364.5 105.5H369.5L367 108.0Z" fill="#e0e0e0"/><g transform="translate(0,-2.7)"><path d="M372 78L377 68L380 78ZM377 68L384 78" stroke="#d2d2d2" stroke-width="1.0" fill="none" stroke-linejoin="round" /><path d="M376 78L381 69L385 78" stroke="#3d7fd6" stroke-width="1.2" fill="none" stroke-linejoin="round" /><path d="M389 78L393 68M389 78H400M393 68L398 75" stroke="#e89a3c" stroke-width="1.2" fill="none" stroke-linejoin="round" /><circle cx="389" cy="78" r="1.2" stroke="#3d7fd6" stroke-width="1" fill="#3d7fd6"/><circle cx="400" cy="78" r="1.2" stroke="#3d7fd6" stroke-width="1" fill="#3d7fd6"/><path d="M405.5 73.5H414.5M410 69V78" stroke="#3d7fd6" stroke-width="1.1" fill="none" stroke-linejoin="round" /><path d="M410 67.5L408 70H412ZM410 79.5L408 77H412ZM404 73.5L406.5 71.5V75.5ZM416 73.5L413.5 71.5V75.5Z" fill="#3d7fd6"/><circle cx="410" cy="73.5" r="1" stroke="#7cd0ff" stroke-width="0.5" fill="#7cd0ff"/><rect x="421.5" y="67.5" width="4" height="4" stroke="#d2d2d2" stroke-width="1.0" fill="none"/><rect x="426.5" y="74.5" width="5" height="5" stroke="#3d7fd6" stroke-width="1.0" fill="none"/><rect x="443.5" y="70.5" width="9" height="6" stroke="#3d7fd6" stroke-width="1.2" fill="none"/><path d="M448 79L454 66" stroke="#d2d2d2" stroke-width="1.2" fill="none" stroke-linejoin="round" /><path d="M456.5 72.5H461.5L459 75.0Z" fill="#e0e0e0"/><rect x="373.5" y="82.5" width="4" height="9" stroke="#3d7fd6" stroke-width="1.2" fill="none"/><rect x="379.5" y="88.5" width="4" height="4" stroke="#d2d2d2" stroke-width="1.0" fill="none"/><path d="M394.4 82V94" stroke="#d2d2d2" stroke-width="1.0" fill="none" stroke-linejoin="round" /><path d="M392 84L388 88L392 92M397 84L401 88L397 92" stroke="#3d7fd6" stroke-width="1.2" fill="none" stroke-linejoin="round" /><circle cx="410.2" cy="88" r="4.5" stroke="#3d7fd6" stroke-width="1.2" fill="none"/><circle cx="410.2" cy="88" r="1.3" stroke="#d2d2d2" stroke-width="1" fill="#d2d2d2"/><path d="M421.5 82.5H427L431 93.5H421.5Z" stroke="#d2d2d2" stroke-width="1.0" fill="none" stroke-linejoin="round" /><path d="M427 82.5L431 93.5" stroke="#3d7fd6" stroke-width="1.2" fill="none" stroke-linejoin="round" /><path d="M443 94V85C443 83 445 82 447 82H454" stroke="#d2d2d2" stroke-width="1.2" fill="none" stroke-linejoin="round" /><path d="M443 88C443 85 446 82 449 82" stroke="#3d7fd6" stroke-width="1.2" fill="none" stroke-linejoin="round" /><path d="M456.5 87H461.5L459 89.5Z" fill="#e0e0e0"/><path d="M374 97L383 107M383 97L374 107" stroke="#e89a3c" stroke-width="1.3" fill="none" stroke-linejoin="round" /><rect x="389.5" y="97.5" width="10" height="8" stroke="#d2d2d2" stroke-width="1.0" fill="none"/><rect x="391" y="101" width="4" height="3" stroke="#d2d2d2" stroke-width="1" fill="#d2d2d2"/><path d="M395 100L398 98" stroke="#3d7fd6" stroke-width="1" fill="none" stroke-linejoin="round" /><path d="M406.5 107V101C406.5 97 412.5 97 412.5 101V103" stroke="#d2d2d2" stroke-width="1.2" fill="none" stroke-linejoin="round" /><path d="M409.5 105V101" stroke="#3d7fd6" stroke-width="1.2" fill="none" stroke-linejoin="round" /><path d="M426 96L431 102.5L426 109L421 102.5Z" stroke="#3d7fd6" stroke-width="1.5" fill="none" stroke-linejoin="round" /><rect x="423.5" y="100" width="5" height="5" stroke="#d2d2d2" stroke-width="1" fill="none"/><path d="M433.5 101.5H438.5L436 104.0Z" fill="#e0e0e0"/><circle cx="447.5" cy="104" r="4" stroke="#d2d2d2" stroke-width="1.2" fill="none"/><path d="M450.5 101L454 97M452 97H454V99" stroke="#e89a3c" stroke-width="1.0" fill="none" stroke-linejoin="round" /><path d="M456.5 101.5H461.5L459 104.0Z" fill="#e0e0e0"/></g><rect x="467" y="64" width="1" height="62" fill="#3a3b3e"/><path d="M476 73L481 69.5H496L491 73ZM476 73V81H491V73M491 81L496 77.5V69.5" stroke="#d2d2d2" stroke-width="1.1" fill="none" stroke-linejoin="round" /><path d="M481 86V72L492 64.5V79Z" stroke="#3d7fd6" stroke-width="1.0" fill="rgba(60,120,210,0.55)" stroke-linejoin="round" /><path d="M481 73H491M485 69.5V81" stroke="#d2d2d2" stroke-width="0.7" fill="none" stroke-linejoin="round" /><g transform="translate(0,-3)"><path d="M508 69L511 66L512 74L509 77Z" stroke="#3d7fd6" stroke-width="1.0" fill="#2d5fa8" stroke-linejoin="round" /><circle cx="513" cy="75" r="2.2" stroke="#d2d2d2" stroke-width="1" fill="none"/><circle cx="515" cy="77" r="2.2" stroke="#d2d2d2" stroke-width="1" fill="none"/><path d="M506 90L509 86H517L514 90ZM506 90V93H514" stroke="#d2d2d2" stroke-width="1.0" fill="none" stroke-linejoin="round" /><path d="M512 93L518 84V81L512 88Z" stroke="#3d7fd6" stroke-width="1.0" fill="#2d5fa8" stroke-linejoin="round" /><rect x="509.5" y="97.5" width="8" height="8" stroke="#d2d2d2" stroke-width="1.0" fill="none"/><circle cx="507" cy="106" r="2.5" stroke="#d2d2d2" stroke-width="1" fill="#cfcfcf"/><circle cx="513" cy="101" r="2" stroke="#111" stroke-width="1" fill="#111"/><path d="M519.1 101.5H524.1L521.6 104.0Z" fill="#e0e0e0"/></g><rect x="529.5" y="64" width="1" height="62" fill="#3a3b3e"/><path d="M542.6 84V67M540.5 69.5L542.6 66L544.7 69.5Z" stroke="#d2d2d2" stroke-width="1.2" fill="#d2d2d2" stroke-linejoin="round" /><path d="M542.6 83.5H559M556.5 81.4L560 83.5L556.5 85.6Z" stroke="#d2d2d2" stroke-width="1.2" fill="#d2d2d2" stroke-linejoin="round" /><path d="M542.6 83.5L548.5 77.5" stroke="#d2d2d2" stroke-width="1.0" fill="none" stroke-linejoin="round" /><rect x="550.5" y="64.5" width="11" height="10" stroke="#d2d2d2" stroke-width="1" fill="#e8e8e8"/><rect x="550" y="64" width="12" height="2.5" fill="#3d7fd6"/><path d="M552.5 69H559.5M552.5 71.5H559.5" stroke="#8a8a8a" stroke-width="0.8" fill="none" stroke-linejoin="round" /><g transform="translate(0,-3)"><path d="M568.7 69.1V77.6H577.5" stroke="#8a8a8a" stroke-width="1.3" fill="none" stroke-linejoin="round" /><path d="M568.7 67.6L566.9 69.8H570.5ZM579 77.6L576.8 75.8V79.39999999999999Z" fill="#b0b0b0"/><path d="M569 77.1L572 74.1" stroke="#8a8a8a" stroke-width="1.0" fill="none" stroke-linejoin="round" /><circle cx="574.5" cy="71.1" r="3.3" stroke="#bdbdbd" stroke-width="1.2" fill="#3a3b3e"/><path d="M573 70.1L575.5 72.1" stroke="#d2d2d2" stroke-width="1.2" fill="none" stroke-linejoin="round" /><path d="M568.7 83.3V91.8H577.5" stroke="#8a8a8a" stroke-width="1.3" fill="none" stroke-linejoin="round" /><path d="M568.7 81.8L566.9 84.0H570.5ZM579 91.8L576.8 90.0V93.6Z" fill="#b0b0b0"/><rect x="571.5" y="80.8" width="5.5" height="5.5" fill="#3d7fd6"/><rect x="572" y="83.3" width="2.5" height="2.5" fill="#5fd0ee"/><rect x="575.5" y="80.3" width="2.5" height="5" stroke="#d2d2d2" stroke-width="0.6" fill="none"/><path d="M568.7 97.9V106.4H577.5" stroke="#8a8a8a" stroke-width="1.3" fill="none" stroke-linejoin="round" /><path d="M568.7 96.4L566.9 98.60000000000001H570.5ZM579 106.4L576.8 104.60000000000001V108.2Z" fill="#b0b0b0"/><rect x="571.5" y="95.4" width="6.5" height="6" fill="#d8d8d8"/><rect x="571.5" y="95.4" width="6.5" height="2" fill="#3d7fd6"/></g><rect x="587.5" y="64" width="1" height="62" fill="#3a3b3e"/><path d="M593 73C596 70 601 70 604 73C601 76 596 76 593 73Z" stroke="#3d7fd6" stroke-width="1.2" fill="#9cc8f2" stroke-linejoin="round" /><circle cx="598.5" cy="73" r="1.3" stroke="#1c3b66" stroke-width="1" fill="#1c3b66"/><path d="M593 86.5C596 83.5 601 83.5 604 86.5C601 89.5 596 89.5 593 86.5Z" stroke="#3d7fd6" stroke-width="1.2" fill="#9cc8f2" stroke-linejoin="round" /><circle cx="598.5" cy="86.5" r="1.3" stroke="#1c3b66" stroke-width="1" fill="#1c3b66"/><rect x="599" y="89.5" width="4" height="4" fill="#3d7fd6"/><rect x="610.5" y="82.5" width="6" height="11" stroke="#d2d2d2" stroke-width="1.0" fill="none"/><path d="M612 85H615M612 88H615" stroke="#d2d2d2" stroke-width="1.0" fill="none" stroke-linejoin="round" /><rect x="625" y="83" width="10" height="10" fill="#7a7a7a"/><path d="M627 90.5H630V88H627V85.5H630M631 85.5H633V90.5H631Z" stroke="#e6e6e6" stroke-width="0.7" fill="none" stroke-linejoin="round" /><rect x="641.5" y="82.5" width="9" height="10" stroke="#d2d2d2" stroke-width="1.0" fill="none"/><rect x="643.5" y="85" width="5" height="5" stroke="#666" stroke-width="1.0" fill="none"/><path d="M657 93V83L661 85V93ZM661 85L664 88V93" stroke="#d2d2d2" stroke-width="1.0" fill="none" stroke-linejoin="round" /><rect x="657" y="91" width="9" height="2" fill="#8a8a8a"/><path d="M593 99H604V106H593ZM595 99L596 97.5H600L601 99" stroke="#d2d2d2" stroke-width="1.0" fill="none" stroke-linejoin="round" /><circle cx="598.5" cy="102.5" r="2" stroke="#d2d2d2" stroke-width="1" fill="none"/><rect x="609.5" y="96.5" width="9" height="11" stroke="#8a8a8a" stroke-width="1.2" fill="none"/><path d="M614 97V107" stroke="#8a8a8a" stroke-width="1.2" fill="none" stroke-linejoin="round" /><rect x="625" y="97" width="11" height="11" fill="#3a86e8"/><path d="M627 104.5H630V102H627V99.5H630M631 99.5H633V104.5H631Z" stroke="#e6e6e6" stroke-width="0.7" fill="none" stroke-linejoin="round" /><rect x="641.5" y="97.5" width="9" height="10" stroke="#d2d2d2" stroke-width="1.0" fill="none"/><path d="M648 104L651 106L648 108" stroke="#e89a3c" stroke-width="1.0" fill="none" stroke-linejoin="round" /><rect x="657.5" y="100.5" width="8" height="7" stroke="#d2d2d2" stroke-width="1.0" fill="#2a4d80"/><rect x="660.5" y="97.5" width="7" height="6" stroke="#3d7fd6" stroke-width="1.0" fill="#2a4d80"/><path d="M728 71.0L732 75.0L736 71.0" stroke="#d0d0d0" stroke-width="1.0" fill="none" stroke-linejoin="round" /><rect x="753" y="64" width="1" height="62" fill="#3a3b3e"/><path d="M773.6 69V82.5" stroke="#e89a3c" stroke-width="1.2" fill="none" stroke-linejoin="round" /><path d="M776.5 83H788" stroke="#e89a3c" stroke-width="1.2" fill="none" stroke-linejoin="round" stroke-dasharray="1.5 1.2"/><path d="M779 69.3A8.7 8.7 0 0 1 787.7 78" stroke="#e89a3c" stroke-width="1.2" fill="none" stroke-linejoin="round" stroke-dasharray="2 1"/><path d="M771 69.5L773.6 65L776.2 69.5Z" stroke="#3d7fd6" stroke-width="0.8" fill="#3d7fd6" stroke-linejoin="round" /><path d="M789 80.5L793 83L789 85.5Z" stroke="#3d7fd6" stroke-width="0.8" fill="#3d7fd6" stroke-linejoin="round" /><circle cx="773.6" cy="83.3" r="2.2" stroke="#3d7fd6" stroke-width="0.8" fill="#3d7fd6"/><rect x="808" y="64" width="1" height="62" fill="#3a3b3e"/><path d="M819.5 74L827.5 66H839.5L831.5 74Z" stroke="#d2d2d2" stroke-width="1.0" fill="none" stroke-linejoin="round" /><path d="M819.5 78.5L827.5 70.5H839.5L831.5 78.5Z" stroke="#d2d2d2" stroke-width="1.0" fill="none" stroke-linejoin="round" /><path d="M819.5 83L827.5 75H839.5L831.5 83Z" stroke="#d2d2d2" stroke-width="1.0" fill="none" stroke-linejoin="round" /><rect x="826" y="73" width="7" height="3.5" fill="#9a9a9a"/><g transform="translate(0,-2)"><path d="M851 72L853.5 69H861L858.5 72ZM851 74.5H858.5M851 77H858.5" stroke="#d2d2d2" stroke-width="0.9" fill="none" stroke-linejoin="round" /><circle cx="860" cy="77" r="2.2" stroke="#d2d2d2" stroke-width="1.0" fill="none"/><path d="M851 87L853.5 84H861L858.5 87ZM851 89.5H858.5M851 92H858.5" stroke="#d2d2d2" stroke-width="0.9" fill="none" stroke-linejoin="round" /><circle cx="860" cy="91" r="2.5" stroke="#e89a3c" stroke-width="1.0" fill="none"/><path d="M851 101L853.5 98H861L858.5 101ZM851 103.5H858.5M851 106H858.5" stroke="#d2d2d2" stroke-width="0.9" fill="none" stroke-linejoin="round" /><rect x="857.5" y="102.5" width="6" height="5" stroke="#d2d2d2" stroke-width="1" fill="#9cc8f2"/><path d="M868 87L870.5 84H878L875.5 87ZM868 89.5H875.5M868 92H875.5" stroke="#d2d2d2" stroke-width="0.9" fill="none" stroke-linejoin="round" /><circle cx="876" cy="90" r="2.5" stroke="#d2d2d2" stroke-width="1" fill="#cfcfcf"/><path d="M884 87L886.5 84H894L891.5 87ZM884 89.5H891.5M884 92H891.5" stroke="#3d7fd6" stroke-width="0.9" fill="none" stroke-linejoin="round" /><path d="M899 87L901.5 84H909L906.5 87ZM899 89.5H906.5M899 92H906.5" stroke="#d2d2d2" stroke-width="0.9" fill="none" stroke-linejoin="round" /><path d="M915 89L918 85H925L922 89Z" stroke="#d2d2d2" stroke-width="0.9" fill="none" stroke-linejoin="round" /><path d="M920 89L922.5 91.5L920 94L917.5 91.5Z" stroke="#3d7fd6" stroke-width="1" fill="#3d7fd6" stroke-linejoin="round" /><path d="M932 87L934.5 84H942L939.5 87ZM932 89.5H939.5M932 92H939.5" stroke="#d2d2d2" stroke-width="0.9" fill="none" stroke-linejoin="round" /><circle cx="940" cy="90" r="2.5" stroke="#e89a3c" stroke-width="1" fill="none"/><path d="M948 89L951 85H958L955 89Z" stroke="#d2d2d2" stroke-width="0.9" fill="none" stroke-linejoin="round" /><rect x="953" y="90.5" width="5" height="4" fill="#8a8a8a"/><path d="M953.8 90.5V89.5a1.7 1.7 0 0 1 3.4 0V90.5" stroke="#d2d2d2" stroke-width="0.8" fill="none" stroke-linejoin="round" /><path d="M963 89L966 85H973L970 89Z" stroke="#d2d2d2" stroke-width="0.9" fill="none" stroke-linejoin="round" /><rect x="968" y="90.5" width="5" height="4" fill="#e89a3c"/><path d="M968.8 90.5V89.5a1.7 1.7 0 0 1 3.4 0V90.5" stroke="#e89a3c" stroke-width="0.8" fill="none" stroke-linejoin="round" /><path d="M980 87L982.5 84H990L987.5 87ZM980 89.5H987.5M980 92H987.5" stroke="#bdbdbd" stroke-width="0.9" fill="none" stroke-linejoin="round" /></g><path d="M989.5 85H994.5L992 87.5Z" fill="#e0e0e0"/><path d="M869 67a3.2 3.2 0 1 1 4.5 4.5L873 75H870L869.5 72A3.2 3.2 0 0 1 869 67Z" stroke="#e89a3c" stroke-width="1.0" fill="none" stroke-linejoin="round" /><circle cx="882" cy="71" r="3" stroke="#e89a3c" stroke-width="1.3" fill="none"/><path d="M877.5 67L886.5 75M886.5 67L877.5 75" stroke="#e89a3c" stroke-width="0.9" fill="none" stroke-linejoin="round" /><rect x="891.5" y="71.5" width="6" height="5" stroke="#e89a3c" stroke-width="1.0" fill="none"/><path d="M892.5 71.5V69.5a2 2 0 0 1 4 0V71.5" stroke="#d2d2d2" stroke-width="1.0" fill="none" stroke-linejoin="round" /><rect x="903.5" y="66.5" width="6" height="3" stroke="#d2d2d2" stroke-width="1" fill="#cfcfcf"/><rect x="902" y="69.5" width="9" height="5" stroke="#d2d2d2" stroke-width="1" fill="#dcdcdc"/><rect x="914.5" y="65.5" width="11" height="11" stroke="#111" stroke-width="1" fill="#ffffff"/><path d="M986 70.0L990 74.0L994 70.0" stroke="#d0d0d0" stroke-width="1.0" fill="none" stroke-linejoin="round" /><path d="M986 99.0L990 103.0L994 99.0" stroke="#d0d0d0" stroke-width="1.0" fill="none" stroke-linejoin="round" /><rect x="1003" y="64" width="1" height="62" fill="#3a3b3e"/><rect x="1016.5" y="67.5" width="9.5" height="9.5" stroke="#d2d2d2" stroke-width="1.1" fill="none"/><circle cx="1016" cy="78.5" r="5" stroke="#d2d2d2" stroke-width="1.1" fill="none"/><path d="M1027.5 64.5C1031 64.5 1029.5 74.5 1033 75.5C1029.5 76.5 1031 86 1027.5 86" stroke="#d2d2d2" stroke-width="1.1" fill="none" stroke-linejoin="round" /><rect x="1057.5" y="67.5" width="9.5" height="9.5" stroke="#d2d2d2" stroke-width="1.1" fill="none"/><circle cx="1057" cy="78.5" r="5" stroke="#d2d2d2" stroke-width="1.1" fill="none"/><path d="M1068 64.5C1071.5 64.5 1070 72.5 1073 73.5" stroke="#d2d2d2" stroke-width="1.1" fill="none" stroke-linejoin="round" /><path d="M1070 71L1072.5 74L1070 77" stroke="#e89a3c" stroke-width="1.2" fill="none" stroke-linejoin="round" /><circle cx="1070" cy="79" r="2.2" stroke="#3a2a20" stroke-width="1" fill="#3a2a20"/><rect x="1088" y="64" width="1" height="62" fill="#3a3b3e"/><rect x="1100.5" y="64.5" width="11" height="15" stroke="#4a8ce0" stroke-width="1" fill="#2f6fd0"/><path d="M1103 75L1106 67.5L1109 75M1104 72.5H1108" stroke="#e6e6e6" stroke-width="1.0" fill="none" stroke-linejoin="round" /><path d="M1105.5 71.5H1115.5L1119.5 75.5V86.5H1105.5Z" stroke="#5aa0f0" stroke-width="1" fill="#3a8ef0" stroke-linejoin="round" /><path d="M1109.5 76H1113C1115.5 76 1115.5 79.5 1113 79.5H1109.5ZM1109.5 79.5H1113.5C1116 79.5 1116 83.5 1113.5 83.5H1109.5ZM1109.5 76V83.5" stroke="#e6e6e6" stroke-width="1.1" fill="none" stroke-linejoin="round" /></svg>
<div class="a" style="left:0px;top:130px;width:229px;height:14px;background:#1c1d1f;"></div>
<div class="a" style="left:145px;top:130px;width:62px;height:14px;background:#2a2b2e;"></div>
<div class="a" style="left:2px;top:130px;width:1px;height:14px;background:#26272a;"></div>
<div class="a" style="left:55.5px;top:130px;width:1px;height:14px;background:#2a2b2e;"></div>
<div class="a" style="left:143px;top:130px;width:1px;height:14px;background:#2a2b2e;"></div>
<div class="t" style="left:9.80px;top:133.01px;font-size:9.2px;color:#dcdcdc;font-weight:normal;line-height:1;transform:scaleX(0.9427);transform-origin:0 0;">Start</div>
<div class="t" style="left:66.50px;top:133.01px;font-size:9.2px;color:#dcdcdc;font-weight:normal;line-height:1;transform:scaleX(0.9545);transform-origin:0 0;">HOUSE 3D*</div>
<div class="t" style="left:152.70px;top:133.01px;font-size:9.2px;color:#ffffff;font-weight:bold;line-height:1;transform:scaleX(1.0435);transform-origin:0 0;">W2_1*</div>
<svg class="a" style="left:41.7px;top:133.3px;" width="7.6" height="7.6" viewBox="0 0 7.6 7.6"><path d="M0 0L7.6 7.6M7.6 0L0 7.6" stroke="#d8d8d8" stroke-width="1.1"/></svg>
<svg class="a" style="left:130.2px;top:133.3px;" width="7.6" height="7.6" viewBox="0 0 7.6 7.6"><path d="M0 0L7.6 7.6M7.6 0L0 7.6" stroke="#d8d8d8" stroke-width="1.1"/></svg>
<svg class="a" style="left:193.6px;top:133.3px;" width="7.6" height="7.6" viewBox="0 0 7.6 7.6"><path d="M0 0L7.6 7.6M7.6 0L0 7.6" stroke="#d8d8d8" stroke-width="1.1"/></svg>
<svg class="a" style="left:214px;top:132.5px;" width="9" height="9" viewBox="0 0 9 9"><path d="M4.5 0V9M0 4.5H9" stroke="#d8d8d8" stroke-width="1.2"/></svg>
<div class="a" style="left:0px;top:144px;width:1003px;height:1px;background:#46474a;"></div>
<svg class="a" style="left:0px;top:0px;" width="1280" height="720" viewBox="0 0 1280 720"><polygon points="217.89,340.76 675.94,235.74 820.25,370.44 362.20,475.46" fill="#c9c9c9"/><polygon points="217.89,340.76 675.94,235.74 675.94,243.24 217.89,348.26" fill="#d2d0d0"/><polygon points="217.89,348.26 675.94,243.24 820.25,377.94 362.20,482.96" fill="#00cdd1"/><polygon points="284.58,403.01 742.63,297.99 753.34,307.98 295.28,413.00" fill="#d6d4d4"/><polygon points="295.28,413.00 753.34,307.98 753.34,315.48 295.28,420.50" fill="#d3d1d1"/><polygon points="675.94,235.74 820.25,370.44 820.25,377.94 675.94,243.24" fill="#c6c6c6" /><path d="M192.40,336.70 L684.40,223.90 L845.10,373.90 L353.10,486.70 Z M217.89,340.76 L362.20,475.46 L820.25,370.44 L675.94,235.74 Z" fill="#d9d9d9" fill-rule="evenodd"/><polygon points="192.40,336.70 353.10,486.70 353.10,519.70 192.40,369.70" fill="#c3c3c3"/><polygon points="353.10,486.70 845.10,373.90 845.10,406.90 353.10,519.70" fill="#d5d5d5"/><line x1="192.40" y1="336.70" x2="684.40" y2="223.90" stroke="#ffffff" stroke-width="1.15"/><line x1="684.40" y1="223.90" x2="845.10" y2="373.90" stroke="#ffffff" stroke-width="1.15"/><line x1="845.10" y1="373.90" x2="353.10" y2="486.70" stroke="#ffffff" stroke-width="1.15"/><line x1="353.10" y1="486.70" x2="192.40" y2="336.70" stroke="#ffffff" stroke-width="1.15"/><line x1="192.40" y1="336.70" x2="192.40" y2="369.70" stroke="#ffffff" stroke-width="1.15"/><line x1="353.10" y1="486.70" x2="353.10" y2="519.70" stroke="#ffffff" stroke-width="1.15"/><line x1="845.10" y1="373.90" x2="845.10" y2="406.90" stroke="#ffffff" stroke-width="1.15"/><line x1="192.40" y1="369.70" x2="353.10" y2="519.70" stroke="#ffffff" stroke-width="1.15"/><line x1="353.10" y1="519.70" x2="845.10" y2="406.90" stroke="#ffffff" stroke-width="1.15"/><line x1="217.89" y1="340.76" x2="675.94" y2="235.74" stroke="#ffffff" stroke-width="1.15"/><line x1="675.94" y1="235.74" x2="820.25" y2="370.44" stroke="#ffffff" stroke-width="1.15"/><line x1="820.25" y1="370.44" x2="362.20" y2="475.46" stroke="#ffffff" stroke-width="1.15"/><line x1="362.20" y1="475.46" x2="217.89" y2="340.76" stroke="#ffffff" stroke-width="1.15"/><line x1="295.28" y1="413.00" x2="753.34" y2="307.98" stroke="#ffffff" stroke-width="1.15"/><line x1="284.58" y1="403.01" x2="742.63" y2="297.99" stroke="#ffffff" stroke-width="1.15"/><line x1="675.94" y1="235.74" x2="675.94" y2="243.24" stroke="#ffffff" stroke-width="1.15"/><line x1="521.30" y1="271.30" x2="665.30" y2="405.80" stroke="#e8ffff" stroke-width="0.8"/><line x1="537.80" y1="267.70" x2="680.60" y2="401.10" stroke="#e8ffff" stroke-width="0.8"/></svg>
<div class="a" style="left:0px;top:608px;width:1003px;height:14px;background:#2b2c2f;"></div>
<div class="a" style="left:0px;top:608px;width:13px;height:14px;background:#1d1e20;"></div>
<div class="a" style="left:1px;top:608px;width:1px;height:14px;background:#5a5b5e;"></div>
<div class="a" style="left:14px;top:608px;width:13px;height:14px;background:#1d1e20;"></div>
<div class="a" style="left:15px;top:608px;width:1px;height:14px;background:#5a5b5e;"></div>
<div class="a" style="left:28px;top:608px;width:13px;height:14px;background:#1d1e20;"></div>
<div class="a" style="left:29px;top:608px;width:1px;height:14px;background:#5a5b5e;"></div>
<div class="a" style="left:42px;top:608px;width:13px;height:14px;background:#1d1e20;"></div>
<div class="a" style="left:43px;top:608px;width:1px;height:14px;background:#5a5b5e;"></div>
<div class="a" style="left:56px;top:608px;width:13px;height:14px;background:#1d1e20;"></div>
<div class="a" style="left:57px;top:608px;width:1px;height:14px;background:#5a5b5e;"></div>
<div class="a" style="left:69px;top:608px;width:31px;height:14px;background:#2a2b2e;"></div>
<div class="a" style="left:100px;top:608px;width:37px;height:14px;background:#1d1e20;"></div>
<div class="a" style="left:137px;top:608px;width:13px;height:14px;background:#1d1e20;"></div>
<div class="a" style="left:0px;top:622px;width:1003px;height:1px;background:#4a4c4f;"></div>
<div class="a" style="left:0px;top:623px;width:1003px;height:1px;background:#1e1f21;"></div>
<svg class="a" style="left:0px;top:608px;" width="75" height="14" viewBox="0 0 75 14"><path d="M4 3V11M10 3L5.5 7L10 11Z" stroke="#e0e0e0" fill="#e0e0e0"/><path d="M23 3L18.5 7L23 11Z" fill="#e0e0e0"/><path d="M33 3L37.5 7L33 11Z" fill="#e0e0e0"/><path d="M52 3V11M46 3L50.5 7L46 11Z" stroke="#e0e0e0" fill="#e0e0e0"/><rect x="58.5" y="3.5" width="7" height="8" stroke="#d0d0d0" fill="none"/><path d="M59 6.5H65M59 9H65" stroke="#d0d0d0"/></svg>
<div class="t" style="left:72.25px;top:609.54px;font-size:9.4px;color:#f2f2f2;font-weight:bold;line-height:1;transform:scaleX(0.9203);transform-origin:0 0;">Model</div>
<div class="t" style="left:103.75px;top:609.54px;font-size:9.4px;color:#dcdcdc;font-weight:normal;line-height:1;transform:scaleX(0.8591);transform-origin:0 0;">Layout1</div>
<svg class="a" style="left:139px;top:611px;" width="8" height="8" viewBox="0 0 8 8"><path d="M4 0V8M0 4H8" stroke="#d8d8d8" stroke-width="1.3"/></svg>
<div class="t" style="left:11px;top:632.65px;font-size:10px;color:#f2f2f2;font-weight:normal;line-height:1;font-family:'Liberation Mono',monospace;">: ERASE</div>
<div class="t" style="left:11px;top:646.15px;font-size:10px;color:#f2f2f2;font-weight:normal;line-height:1;font-family:'Liberation Mono',monospace;">Select entities, edges or faces [selection options (?)]:</div>
<div class="t" style="left:11px;top:659.4499999999999px;font-size:10px;color:#f2f2f2;font-weight:normal;line-height:1;font-family:'Liberation Mono',monospace;">Entities in set: 1</div>
<div class="t" style="left:11px;top:672.65px;font-size:10px;color:#f2f2f2;font-weight:normal;line-height:1;font-family:'Liberation Mono',monospace;">Select entities, edges or faces [selection options (?)]:</div>
<div class="t" style="left:8px;top:692.35px;font-size:10px;color:#d8d8d8;font-weight:normal;line-height:1;font-family:'Liberation Mono',monospace;">:</div>
<div class="t" style="left:20px;top:692.35px;font-size:10px;color:#c0c0c0;font-weight:normal;line-height:1;font-family:'Liberation Mono',monospace;font-style:italic;-webkit-text-stroke:0">Enter command</div>
<svg class="a" style="left:0px;top:626px;" width="7" height="7" viewBox="0 0 7 7"><path d="M0.5 0.5L6 6M6 0.5L0.5 6" stroke="#d8d8d8" stroke-width="1.2"/></svg>
<div class="a" style="left:3px;top:654px;width:1.5px;height:1.5px;background:#b0b0b0;"></div>
<div class="a" style="left:3px;top:657px;width:1.5px;height:1.5px;background:#b0b0b0;"></div>
<div class="a" style="left:3px;top:660px;width:1.5px;height:1.5px;background:#b0b0b0;"></div>
<div class="a" style="left:3px;top:663px;width:1.5px;height:1.5px;background:#b0b0b0;"></div>
<div class="a" style="left:3px;top:666px;width:1.5px;height:1.5px;background:#b0b0b0;"></div>
<div class="t" style="left:1.90px;top:708.55px;font-size:8.8px;color:#e4e4e4;font-weight:normal;line-height:1;transform:scaleX(0.9201);transform-origin:0 0;">Ready</div>
<div class="a" style="left:941px;top:706px;width:28px;height:13px;background:#3a3b3e;"></div>
<div class="a" style="left:972px;top:706px;width:33px;height:13px;background:#3a3b3e;"></div>
<div class="a" style="left:1071.5px;top:706px;width:23.5px;height:13px;background:#3a3b3e;"></div>
<div class="a" style="left:1098.5px;top:706px;width:17.5px;height:13px;background:#3a3b3e;"></div>
<div class="a" style="left:1146.5px;top:706px;width:11.0px;height:13px;background:#3a3b3e;"></div>
<div class="a" style="left:1162.5px;top:706px;width:17.0px;height:13px;background:#3a3b3e;"></div>
<div class="t" style="left:624.50px;top:709.05px;font-size:8.8px;color:#e8e8e8;font-weight:normal;line-height:1;transform:scaleX(0.9849);transform-origin:0 0;">-86.7499, 75.2835, 0</div>
<div class="t" style="left:711.00px;top:709.05px;font-size:8.8px;color:#e8e8e8;font-weight:normal;line-height:1;transform:scaleX(0.9516);transform-origin:0 0;">Standard</div>
<div class="t" style="left:751.00px;top:709.05px;font-size:8.8px;color:#e8e8e8;font-weight:normal;line-height:1;transform:scaleX(0.9464);transform-origin:0 0;">ISO-25</div>
<div class="t" style="left:783.00px;top:709.05px;font-size:8.8px;color:#e8e8e8;font-weight:normal;line-height:1;transform:scaleX(0.9446);transform-origin:0 0;">Modeling</div>
<div class="t" style="left:825.00px;top:709.05px;font-size:8.8px;color:#6a6b6e;font-weight:normal;line-height:1;transform:scaleX(0.8757);transform-origin:0 0;">SNAP</div>
<div class="t" style="left:853.00px;top:709.05px;font-size:8.8px;color:#6a6b6e;font-weight:normal;line-height:1;transform:scaleX(0.8909);transform-origin:0 0;">GRID</div>
<div class="t" style="left:878.00px;top:709.05px;font-size:8.8px;color:#6a6b6e;font-weight:normal;line-height:1;transform:scaleX(0.8629);transform-origin:0 0;">ORTHO</div>
<div class="t" style="left:911.00px;top:709.05px;font-size:8.8px;color:#6a6b6e;font-weight:normal;line-height:1;transform:scaleX(0.8514);transform-origin:0 0;">POLAR</div>
<div class="t" style="left:943.00px;top:709.05px;font-size:8.8px;color:#e8e8e8;font-weight:normal;line-height:1;transform:scaleX(0.8213);transform-origin:0 0;">ESNAP</div>
<div class="t" style="left:973.50px;top:709.05px;font-size:8.8px;color:#e8e8e8;font-weight:normal;line-height:1;transform:scaleX(0.8407);transform-origin:0 0;">STRACK</div>
<div class="t" style="left:1009.70px;top:709.05px;font-size:8.8px;color:#6a6b6e;font-weight:normal;line-height:1;transform:scaleX(0.9325);transform-origin:0 0;">LWT</div>
<div class="t" style="left:1031.75px;top:709.05px;font-size:8.8px;color:#e8e8e8;font-weight:normal;line-height:1;transform:scaleX(0.9290);transform-origin:0 0;">TILE</div>
<div class="t" style="left:1055.00px;top:709.05px;font-size:8.8px;color:#e8e8e8;font-weight:normal;line-height:1;transform:scaleX(0.9810);transform-origin:0 0;">1:1</div>
<div class="t" style="left:1073.00px;top:709.05px;font-size:8.8px;color:#e8e8e8;font-weight:normal;line-height:1;transform:scaleX(0.8217);transform-origin:0 0;">DUCS</div>
<div class="t" style="left:1099.80px;top:709.05px;font-size:8.8px;color:#e8e8e8;font-weight:normal;line-height:1;transform:scaleX(0.7917);transform-origin:0 0;">DYN</div>
<div class="t" style="left:1120.30px;top:709.05px;font-size:8.8px;color:#6a6b6e;font-weight:normal;line-height:1;transform:scaleX(0.8533);transform-origin:0 0;">QUAD</div>
<div class="t" style="left:1148.00px;top:709.05px;font-size:8.8px;color:#e8e8e8;font-weight:normal;line-height:1;transform:scaleX(0.6913);transform-origin:0 0;">RT</div>
<div class="t" style="left:1164.00px;top:709.05px;font-size:8.8px;color:#e8e8e8;font-weight:normal;line-height:1;transform:scaleX(0.7723);transform-origin:0 0;">HKA</div>
<div class="t" style="left:1183.90px;top:709.05px;font-size:8.8px;color:#6a6b6e;font-weight:normal;line-height:1;transform:scaleX(0.8755);transform-origin:0 0;">LOCKUI</div>
<div class="t" style="left:1217.40px;top:709.05px;font-size:8.8px;color:#e8e8e8;font-weight:normal;line-height:1;transform:scaleX(0.9462);transform-origin:0 0;">None</div>
<div class="a" style="left:708.5px;top:707px;width:1px;height:12px;background:#8a8a8a;"></div>
<div class="a" style="left:748px;top:707px;width:1px;height:12px;background:#8a8a8a;"></div>
<div class="a" style="left:781px;top:707px;width:1px;height:12px;background:#8a8a8a;"></div>
<div class="a" style="left:820px;top:707px;width:1px;height:12px;background:#6a6b6e;"></div>
<div class="a" style="left:849px;top:707px;width:1px;height:12px;background:#6a6b6e;"></div>
<div class="a" style="left:875.5px;top:707px;width:1px;height:12px;background:#6a6b6e;"></div>
<div class="a" style="left:908px;top:707px;width:1px;height:12px;background:#6a6b6e;"></div>
<div class="a" style="left:938.5px;top:707px;width:1px;height:12px;background:#6a6b6e;"></div>
<div class="a" style="left:970.5px;top:707px;width:1px;height:12px;background:#6a6b6e;"></div>
<div class="a" style="left:1007px;top:707px;width:1px;height:12px;background:#6a6b6e;"></div>
<div class="a" style="left:1029px;top:707px;width:1px;height:12px;background:#6a6b6e;"></div>
<div class="a" style="left:1052px;top:707px;width:1px;height:12px;background:#6a6b6e;"></div>
<div class="a" style="left:1070px;top:707px;width:1px;height:12px;background:#6a6b6e;"></div>
<div class="a" style="left:1096.5px;top:707px;width:1px;height:12px;background:#6a6b6e;"></div>
<div class="a" style="left:1117.5px;top:707px;width:1px;height:12px;background:#6a6b6e;"></div>
<div class="a" style="left:1145px;top:707px;width:1px;height:12px;background:#6a6b6e;"></div>
<div class="a" style="left:1160px;top:707px;width:1px;height:12px;background:#6a6b6e;"></div>
<div class="a" style="left:1181px;top:707px;width:1px;height:12px;background:#6a6b6e;"></div>
<div class="a" style="left:1215px;top:707px;width:1px;height:12px;background:#6a6b6e;"></div>
<div class="a" style="left:1240.5px;top:707px;width:1px;height:12px;background:#6a6b6e;"></div>
<div class="a" style="left:575px;top:706px;width:1px;height:12px;background:#4a4b4e;"></div>
<svg class="a" style="left:1243px;top:711px;" width="6" height="4" viewBox="0 0 6 4"><path d="M0 0H6L3 3.5Z" fill="#e0e0e0"/></svg>
<div class="a" style="left:1277.5px;top:711px;width:2px;height:2px;background:#a0a0a0;"></div>
<div class="a" style="left:1277.5px;top:714.5px;width:2px;height:2px;background:#a0a0a0;"></div>
<div class="a" style="left:1273.5px;top:714.5px;width:2px;height:2px;background:#a0a0a0;"></div>
<div class="a" style="left:1277.5px;top:718px;width:2px;height:2px;background:#a0a0a0;"></div>
<div class="a" style="left:1273.5px;top:718px;width:2px;height:2px;background:#a0a0a0;"></div>
<div class="a" style="left:1269.5px;top:718px;width:2px;height:2px;background:#a0a0a0;"></div>
<div class="t" style="left:1016.40px;top:150.88px;font-size:15.5px;color:#e0e0e0;font-weight:normal;line-height:1;transform:scaleX(0.9654);transform-origin:0 0;">Attachments</div>
<div class="a" style="left:1217.5px;top:155px;width:12px;height:1.6px;background:#e0e0e0;"></div>
<div class="a" style="left:1217.5px;top:158.5px;width:12px;height:1.6px;background:#e0e0e0;"></div>
<div class="a" style="left:1217.5px;top:162px;width:12px;height:1.6px;background:#e0e0e0;"></div>
<div class="a" style="left:1005px;top:192px;width:238px;height:1px;background:#44464a;"></div>
<div class="a" style="left:1008px;top:196px;width:233px;height:16px;background:#ffffff;"></div>
<div class="a" style="left:1057px;top:196px;width:1px;height:16px;background:#e4e4e4;"></div>
<div class="a" style="left:1174px;top:196px;width:1px;height:16px;background:#e4e4e4;"></div>
<div class="a" style="left:1232px;top:196px;width:1px;height:16px;background:#e4e4e4;"></div>
<div class="t" style="left:1062.40px;top:199.35px;font-size:8.8px;color:#2a2a2a;font-weight:normal;line-height:1;transform:scaleX(0.9023);transform-origin:0 0;-webkit-text-stroke:0">Name</div>
<div class="t" style="left:1179.00px;top:199.35px;font-size:8.8px;color:#2a2a2a;font-weight:normal;line-height:1;transform:scaleX(0.8836);transform-origin:0 0;-webkit-text-stroke:0">Load</div>
<div class="t" style="left:1238.00px;top:199.35px;font-size:8.8px;color:#2a2a2a;font-weight:normal;line-height:1;-webkit-text-stroke:0">S</div>
<div class="a" style="left:1008px;top:517px;width:233px;height:14px;background:#f0f0f0;"></div>
<div class="a" style="left:1022px;top:518px;width:64px;height:12px;background:#cdcdcd;"></div>
<div class="a" style="left:1005px;top:535px;width:238px;height:1px;background:#3a3c40;"></div>
<svg class="a" style="left:1005px;top:175px;" width="240" height="20" viewBox="0 0 240 20"><rect x="5" y="3.5" width="11" height="10" stroke="#cfcfcf" fill="#3a3b3e"/><rect x="7.5" y="8.5" width="6" height="2" fill="#cfcfcf"/><rect x="20.5" y="5.5" width="11" height="8" stroke="#3d7fd6" fill="#24406a"/><rect x="22" y="3" width="4" height="4" fill="#3d7fd6"/><path d="M23 11H30" stroke="#cfcfcf"/><rect x="37.5" y="3.5" width="5" height="11" stroke="#e89a3c" fill="none"/><rect x="40.5" y="5.5" width="5" height="10" stroke="#3d7fd6" fill="none"/><path d="M51 5V7M51 10V12M54 7V9" stroke="#cfcfcf" stroke-width="1.3"/><rect x="55.5" y="3.5" width="4" height="12" rx="2" stroke="#3d7fd6" fill="none"/><path d="M209.5 7L217.5 15M217.5 7L209.5 15" stroke="#e89a3c" stroke-width="1.3"/><circle cx="229" cy="11.5" r="4.5" stroke="#3c3e40" stroke-width="2" fill="none"/></svg>
<div class="a" style="left:1257px;top:132px;width:2px;height:2px;background:#b8b8b8;"></div>
<div class="a" style="left:1260px;top:132px;width:2px;height:2px;background:#b8b8b8;"></div>
<div class="a" style="left:1263px;top:132px;width:2px;height:2px;background:#b8b8b8;"></div>
<div class="a" style="left:1266px;top:132px;width:2px;height:2px;background:#b8b8b8;"></div>
<svg class="a" style="left:1246px;top:137px;" width="34" height="568" viewBox="0 0 34 568"><path d="M13.5 23C11 20 10.5 17.5 10.5 16.5A6 6 0 0 1 22.5 16.5C22.5 17.5 22 20 19.5 23" stroke="#d0d0d0" stroke-width="1.2" fill="none"/><rect x="14" y="22" width="5" height="4.5" fill="#8a8a8a"/><path d="M10 50H24M10 55H24M10 60H24" stroke="#d0d0d0" stroke-width="1.1"/><circle cx="14" cy="50" r="1.8" fill="#1c1d1f" stroke="#d0d0d0"/><circle cx="20" cy="55" r="1.8" fill="#1c1d1f" stroke="#d0d0d0"/><circle cx="16" cy="60" r="1.8" fill="#1c1d1f" stroke="#d0d0d0"/><path d="M9 88L17 84L25 88L17 92Z" stroke="#d0d0d0" stroke-width="1.1" fill="none"/><path d="M9 91.5L17 95.5L25 91.5M9 95L17 99L25 95" stroke="#d0d0d0" stroke-width="1.1" fill="none"/><path d="M15 134V121C15 118 20 118 20 121V134C20 138 12.5 138 12.5 134V123" stroke="#b8b8b8" stroke-width="1.3" fill="none"/><rect x="10.5" y="158.5" width="15" height="15" stroke="#d0d0d0" fill="none"/><path d="M10.5 158.5L25.5 173.5M14 158.5V173.5M18 158.5V173.5M22 158.5V173.5M10.5 162H25.5M10.5 166H25.5M10.5 170H25.5" stroke="#d0d0d0" stroke-width="0.6"/><rect x="9.5" y="230.5" width="6" height="3.5" stroke="#d0d0d0" fill="none"/><rect x="15.5" y="236.5" width="8" height="3.5" stroke="#d0d0d0" fill="none"/><rect x="15.5" y="242.5" width="8" height="3.5" stroke="#d0d0d0" fill="none"/><path d="M12 234V244H15.5M12 238H15.5" stroke="#d0d0d0"/><path d="M11 280H24C27 280 27 275 24 275C24 271 18 269 16.5 273C13 272 11 275 12 276.5C9.5 277 9.5 280 11 280Z" stroke="#d0d0d0" stroke-width="1.1" fill="none"/><path d="M17.5 278.5V274.5M16 276L17.5 274.5L19 276" stroke="#d0d0d0"/></svg>
<div class="t" style="left:1254px;top:330px;font-size:13px;color:#dcdcdc;font-family:'Liberation Serif',serif;font-style:italic;line-height:1">f<span style="font-size:10px;font-style:italic">(x)</span></div>
<svg class="a" style="left:1008px;top:517px;" width="233" height="14" viewBox="0 0 233 14"><path d="M8 4L5 7L8 10M227 4L230 7L227 10" stroke="#555" stroke-width="1.3" fill="none"/></svg>
<svg class="a" style="left:0px;top:0px;" width="1280" height="720" viewBox="0 0 1280 720"><circle cx="969.4" cy="177.5" r="25.8" fill="#8e8e8e"/><path d="M969.4 159.5L967.2 156.5L971.6 156.5Z" fill="#3c3c3c"/><path d="M982.1 164.8L982.7 161.1L985.8 164.2Z" fill="#3c3c3c"/><path d="M987.4 177.5L990.4 175.3L990.4 179.7Z" fill="#3c3c3c"/><path d="M982.1 190.2L985.8 190.8L982.7 193.9Z" fill="#3c3c3c"/><path d="M969.4 195.5L971.6 198.5L967.2 198.5Z" fill="#3c3c3c"/><path d="M956.7 190.2L956.1 193.9L953.0 190.8Z" fill="#3c3c3c"/><path d="M951.4 177.5L948.4 179.7L948.4 175.3Z" fill="#3c3c3c"/><path d="M956.7 164.8L953.0 164.2L956.1 161.1Z" fill="#3c3c3c"/></svg>
<svg class="a" style="left:0px;top:0px;" width="1280" height="720" viewBox="0 0 1280 720"><path d="M58.4 548V513" stroke="#2a62ad" stroke-width="2"/><path d="M56 517L58.4 511L60.8 517Z" fill="#3f7ccc"/><path d="M56 501H61L56 507H61" stroke="#2d5c9c" stroke-width="1" fill="none"/><path d="M58.4 548L94 539" stroke="#2a5ea6" stroke-width="1.6"/><path d="M92 536.5L98 538.5L93 542Z" fill="#2a5ea6"/><path d="M101 533L104 537L107 533M104 537V541" stroke="#2a4a70" stroke-width="1" fill="none"/><path d="M58.4 548L77 564" stroke="#b8885a" stroke-width="1.5"/><circle cx="74.5" cy="562" r="1.8" fill="#b8885a"/><path d="M78 564L84 572M84 564L78 572" stroke="#6a6d80" stroke-width="1" fill="none"/><rect x="296" y="146" width="8" height="8" stroke="#c8c8c8" stroke-width="1.2" fill="#111"/><circle cx="298.5" cy="148.5" r="1" fill="#2ad"/><circle cx="299.5" cy="150.5" r="1" fill="#2ad"/><path d="M304 154L315.5 165" stroke="#9a6a5a" stroke-width="1.2"/><path d="M299.5 154V161" stroke="#2f5f9f" stroke-width="1.2"/><path d="M304 148L321 144" stroke="#2f5f9f" stroke-width="1"/><path d="M289 152.5L296 151" stroke="#4a6a9a" stroke-width="1"/></svg>
</body></html>
